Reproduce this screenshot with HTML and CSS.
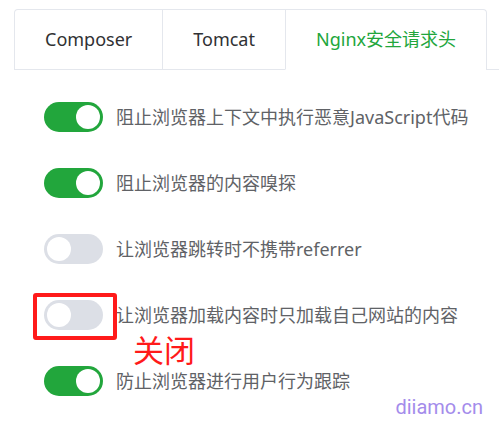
FILE: index.html
```html
<!DOCTYPE html>
<html lang="zh-CN">
<head>
    <meta charset="UTF-8">
    <meta name="viewport" content="width=device-width, initial-scale=1.0">
    <title>Nginx安全请求头</title>
    <link rel="stylesheet" href="styles.css">
</head>
<body>
    <div class="page">
        <div class="tabs-header">
            <div class="tabs-nav">
                <div class="tab">Composer</div>
                <div class="tab">Tomcat</div>
                <div class="tab active">Nginx安全请求头</div>
            </div>
        </div>

        <div class="options">
            <div class="option">
                <span class="switch on"><span class="knob"></span></span>
                <span class="label">阻止浏览器上下文中执行恶意JavaScript代码</span>
            </div>
            <div class="option">
                <span class="switch on"><span class="knob"></span></span>
                <span class="label">阻止浏览器的内容嗅探</span>
            </div>
            <div class="option">
                <span class="switch"><span class="knob"></span></span>
                <span class="label">让浏览器跳转时不携带referrer</span>
            </div>
            <div class="option">
                <span class="switch"><span class="knob"></span></span>
                <span class="label">让浏览器加载内容时只加载自己网站的内容</span>
                <span class="mark-box"></span>
                <span class="mark-text">关闭</span>
            </div>
            <div class="option">
                <span class="switch on"><span class="knob"></span></span>
                <span class="label">防止浏览器进行用户行为跟踪</span>
            </div>
        </div>

        <div class="watermark">diiamo.cn</div>
    </div>
</body>
</html>
```

FILE: styles.css
```css
body {
    margin: 0;
    background-color: #ffffff;
    font-family: "Noto Sans", "Noto Sans CJK SC", sans-serif;
    color: #606266;
}
.page {
    position: relative;
    width: 499px;
    height: 423px;
    overflow: hidden;
    padding-top: 9px;
    box-sizing: border-box;
}
.tabs-header {
    margin-left: 14px;
    border-bottom: 1px solid #e4e7ed;
    display: flex;
}
.tabs-nav {
    display: flex;
    border: 1px solid #e4e7ed;
    border-bottom: none;
    border-radius: 4px 4px 0 0;
    margin-bottom: -1px;
}
.tab {
    height: 59px;
    line-height: 59px;
    padding: 0 30px;
    font-size: 18px;
    color: #303133;
    border-left: 1px solid #e4e7ed;
    border-bottom: 1px solid #e4e7ed;
}
.tab:first-child {
    border-left: none;
}
.tab.active {
    color: #22a63c;
    border-bottom-color: #ffffff;
}
.options {
    padding: 32px 0 0 44px;
    display: flex;
    flex-direction: column;
    gap: 36px;
}
.option {
    position: relative;
    display: flex;
    align-items: center;
    height: 30px;
}
.switch {
    position: relative;
    width: 59px;
    height: 30px;
    border-radius: 15px;
    background-color: #dcdfe6;
    flex-shrink: 0;
}
.switch .knob {
    position: absolute;
    top: 3px;
    left: 3px;
    width: 24px;
    height: 24px;
    border-radius: 50%;
    background-color: #ffffff;
}
.switch.on {
    background-color: #22a63c;
}
.switch.on .knob {
    left: 32px;
}
.label {
    margin-left: 13px;
    font-size: 18px;
    line-height: 24px;
    color: #606266;
    white-space: nowrap;
}
.mark-box {
    position: absolute;
    left: -11px;
    top: -7px;
    width: 76px;
    height: 39px;
    border: 4px solid #ff1a1a;
    border-radius: 3px;
}
.mark-text {
    position: absolute;
    left: 89px;
    top: 33px;
    font-size: 31px;
    line-height: 1;
    color: #ff1a1a;
    font-family: "Noto Sans CJK SC", sans-serif;
}
.watermark {
    position: absolute;
    right: 16px;
    bottom: 6px;
    font-family: Roboto, sans-serif;
    font-size: 20px;
    line-height: 1;
    color: #a48ceb;
}
```
